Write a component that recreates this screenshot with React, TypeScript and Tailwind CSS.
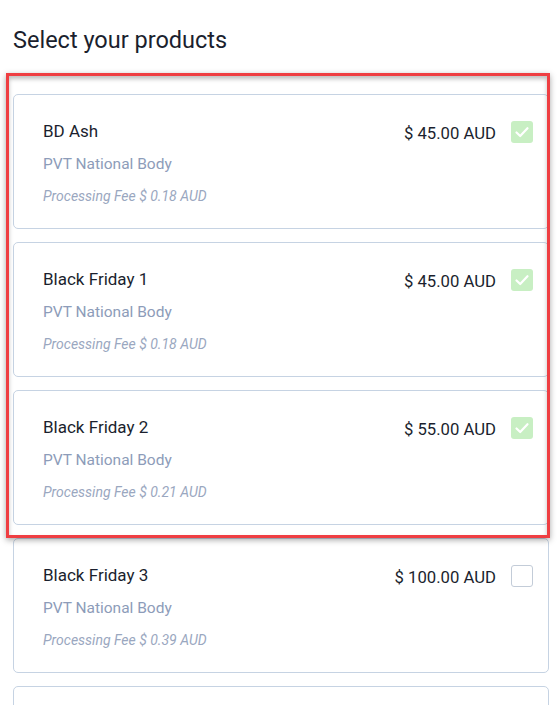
import React from "react";

type Product = { name: string; price: string; fee: string; checked: boolean };

const products: Product[] = [
  { name: "BD Ash", price: "$ 45.00 AUD", fee: "$ 0.18 AUD", checked: true },
  { name: "Black Friday 1", price: "$ 45.00 AUD", fee: "$ 0.18 AUD", checked: true },
  { name: "Black Friday 2", price: "$ 55.00 AUD", fee: "$ 0.21 AUD", checked: true },
  { name: "Black Friday 3", price: "$ 100.00 AUD", fee: "$ 0.39 AUD", checked: false },
];

function Check({ checked }: { checked: boolean }) {
  if (checked) {
    return (
      <div className="w-[22px] h-[22px] rounded-[3px] bg-[#c8efc3] flex items-center justify-center shrink-0">
        <svg width="16" height="16" viewBox="0 0 16 16" fill="none">
          <path d="M2.5 8.5 L6.2 12 L13.5 4.2" stroke="#ffffff" strokeWidth="2.2" strokeLinecap="round" strokeLinejoin="round" />
        </svg>
      </div>
    );
  }
  return <div className="w-[22px] h-[22px] rounded-[3px] border border-[#c3ccd8] bg-white shrink-0" />;
}

function Card({ p }: { p: Product }) {
  return (
    <div className="h-[135px] rounded-[5px] border border-[#c6d3e3] bg-white pl-[29px] pr-[15px] pt-[26px] flex justify-between">
      <div className="flex flex-col">
        <div className="mt-[2px] text-[17px] leading-[16px] text-[#1b1f2e]">{p.name}</div>
        <div className="mt-[17px] text-[15.5px] leading-[16px] text-[#8d9cb9]">PVT National Body</div>
        <div className="mt-[16px] text-[14px] leading-[16px] italic text-[#9aa7c0]">Processing Fee {p.fee}</div>
      </div>
      <div className="flex items-start gap-[15px]">
        <div className="text-[16.7px] leading-[16px] text-[#1b1f2e] mt-[5px]">{p.price}</div>
        <Check checked={p.checked} />
      </div>
    </div>
  );
}

export default function App() {
  return (
    <div className="relative w-[558px] h-[705px] overflow-hidden bg-white" style={{ fontFamily: "Roboto, 'Liberation Sans', sans-serif" }}>
      <div className="pl-[13px] pr-[9px]">
        <h1 className="pt-[27px] text-[23.5px] leading-[27px] text-[#1b1f2e] font-normal">Select your products</h1>
        <div className="mt-[40px] flex flex-col gap-[13px]">
          {products.map((p) => (
            <Card key={p.name} p={p} />
          ))}
          <div className="h-[135px] rounded-[5px] border border-[#c6d3e3] bg-white" />
        </div>
      </div>
      <div className="absolute left-[6px] top-[73px] w-[544px] h-[465px] border-[3px] border-[#ef3e42] shadow-[0_2px_6px_rgba(0,0,0,0.35),inset_0_3px_4px_rgba(0,0,0,0.25)] pointer-events-none" />
    </div>
  );
}
